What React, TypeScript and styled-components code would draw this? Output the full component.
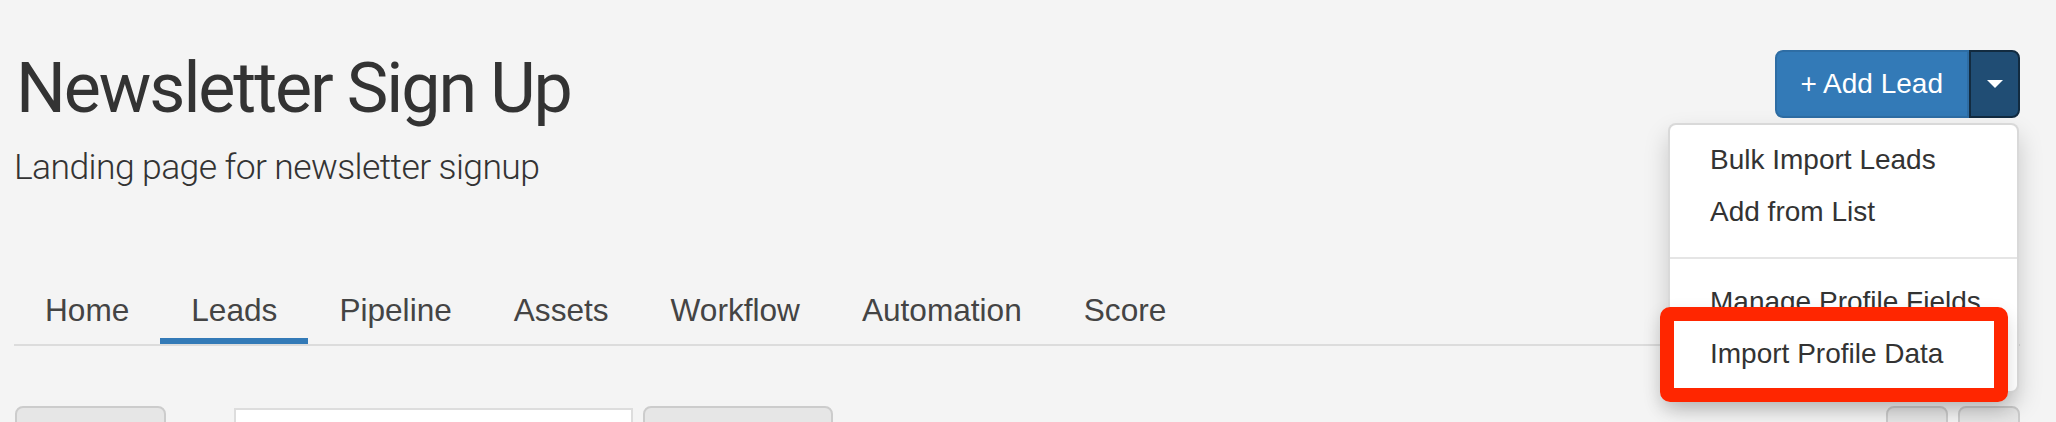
import React from "react";
import styled, { createGlobalStyle } from "styled-components";

const Global = createGlobalStyle`
  html, body { margin: 0; padding: 0; background: #f4f4f4; }
  body { font-family: "Liberation Sans", Arial, sans-serif; color: #333; overflow: hidden; }
  * { box-sizing: border-box; }
`;

const Page = styled.div`
  width: 2056px;
  height: 422px;
  padding: 0 36px 0 14px;
  overflow: hidden;
`;

const Header = styled.header`
  display: flex;
  justify-content: space-between;
  align-items: flex-start;
`;

const TitleBlock = styled.div`
  display: flex;
  flex-direction: column;
`;

const Title = styled.h1`
  margin: 53px 0 0 2px;
  font-family: Roboto, "Noto Sans", sans-serif;
  font-weight: 400;
  font-size: 70px;
  line-height: 70px;
  letter-spacing: -2.1px;
  color: #333;
`;

const Subtitle = styled.p`
  margin: 22px 0 0 0;
  font-family: Roboto, "Liberation Sans", sans-serif;
  font-weight: 300;
  font-size: 35.5px;
  line-height: 44px;
  letter-spacing: -0.6px;
  color: #333;
`;

const Actions = styled.div`
  position: relative;
  margin-top: 50px;
`;

const ButtonGroup = styled.div`
  display: flex;
  height: 68px;
`;

const PrimaryButton = styled.button`
  height: 68px;
  padding: 0 24px;
  border: 2px solid #2e6da4;
  border-radius: 8px 0 0 8px;
  background: #337ab7;
  color: #fff;
  font-family: "Liberation Sans", Arial, sans-serif;
  font-size: 28px;
  line-height: 40px;
`;

const CaretButton = styled.button`
  width: 51px;
  height: 68px;
  padding: 0;
  border: 2px solid #122b40;
  border-radius: 0 8px 8px 0;
  background: #204d74;
  display: flex;
  align-items: center;
  justify-content: center;
`;

const Caret = styled.span`
  display: block;
  width: 0;
  height: 0;
  border-top: 8px solid #fff;
  border-left: 8px solid transparent;
  border-right: 8px solid transparent;
`;

const Menu = styled.ul`
  position: absolute;
  top: calc(100% + 5px);
  right: 1px;
  width: 351px;
  margin: 0;
  padding: 10px 0;
  list-style: none;
  background: #fff;
  border: 2px solid rgba(0, 0, 0, 0.15);
  border-radius: 8px;
  box-shadow: 0 12px 24px rgba(0, 0, 0, 0.175);
  z-index: 5;
`;

const MenuItem = styled.li`
  padding: 5px 40px 7px;
  font-size: 28px;
  line-height: 40px;
  color: #333;
  white-space: nowrap;
`;

const Divider = styled.li`
  height: 2px;
  margin: 18px 0;
  background: #e5e5e5;
`;

const Highlight = styled.div`
  position: absolute;
  left: -10px;
  top: 182px;
  width: 348px;
  height: 95px;
  border: 14px solid #ff2600;
  border-radius: 10px;
  box-shadow: 0 8px 18px rgba(0, 0, 0, 0.15);
  pointer-events: none;
`;

const Tabs = styled.nav`
  display: flex;
  margin-top: 81px;
  border-bottom: 2px solid #dcdcdc;
`;

const Tab = styled.a<{ $active?: boolean }>`
  display: block;
  padding: 20px 31px 8px;
  font-size: 31.6px;
  line-height: 40px;
  color: #444;
  text-decoration: none;
  border-bottom: 6px solid ${(p) => (p.$active ? "#337ab7" : "transparent")};
`;

const Toolbar = styled.div`
  display: flex;
  align-items: flex-start;
  margin-top: 60px;
  padding-left: 1px;
`;

const ToolButton = styled.button<{ $w: number; $gap?: number }>`
  width: ${(p) => p.$w}px;
  height: 68px;
  margin-left: ${(p) => p.$gap ?? 0}px;
  border: 2px solid #ccc;
  border-radius: 8px;
  background: #e6e6e6;
  flex: none;
`;

const SearchInput = styled.input`
  width: 399px;
  height: 68px;
  margin: 2px 0 0 68px;
  border: 2px solid #ddd;
  background: #fff;
  flex: none;
`;

const Spacer = styled.div`
  flex: 1;
`;

const tabs = ["Home", "Leads", "Pipeline", "Assets", "Workflow", "Automation", "Score"];

export default function App() {
  return (
    <Page>
      <Global />
      <Header>
        <TitleBlock>
          <Title>Newsletter Sign Up</Title>
          <Subtitle>Landing page for newsletter signup</Subtitle>
        </TitleBlock>
        <Actions>
          <ButtonGroup>
            <PrimaryButton>+ Add Lead</PrimaryButton>
            <CaretButton>
              <Caret />
            </CaretButton>
          </ButtonGroup>
          <Menu>
            <MenuItem>Bulk Import Leads</MenuItem>
            <MenuItem>Add from List</MenuItem>
            <Divider />
            <MenuItem>Manage Profile Fields</MenuItem>
            <MenuItem>Import Profile Data</MenuItem>
            <Highlight />
          </Menu>
        </Actions>
      </Header>
      <Tabs>
        {tabs.map((t) => (
          <Tab key={t} $active={t === "Leads"}>
            {t}
          </Tab>
        ))}
      </Tabs>
      <Toolbar>
        <ToolButton $w={151} />
        <SearchInput />
        <ToolButton $w={190} $gap={10} />
        <Spacer />
        <ToolButton $w={62} />
        <ToolButton $w={62} $gap={10} />
      </Toolbar>
    </Page>
  );
}
